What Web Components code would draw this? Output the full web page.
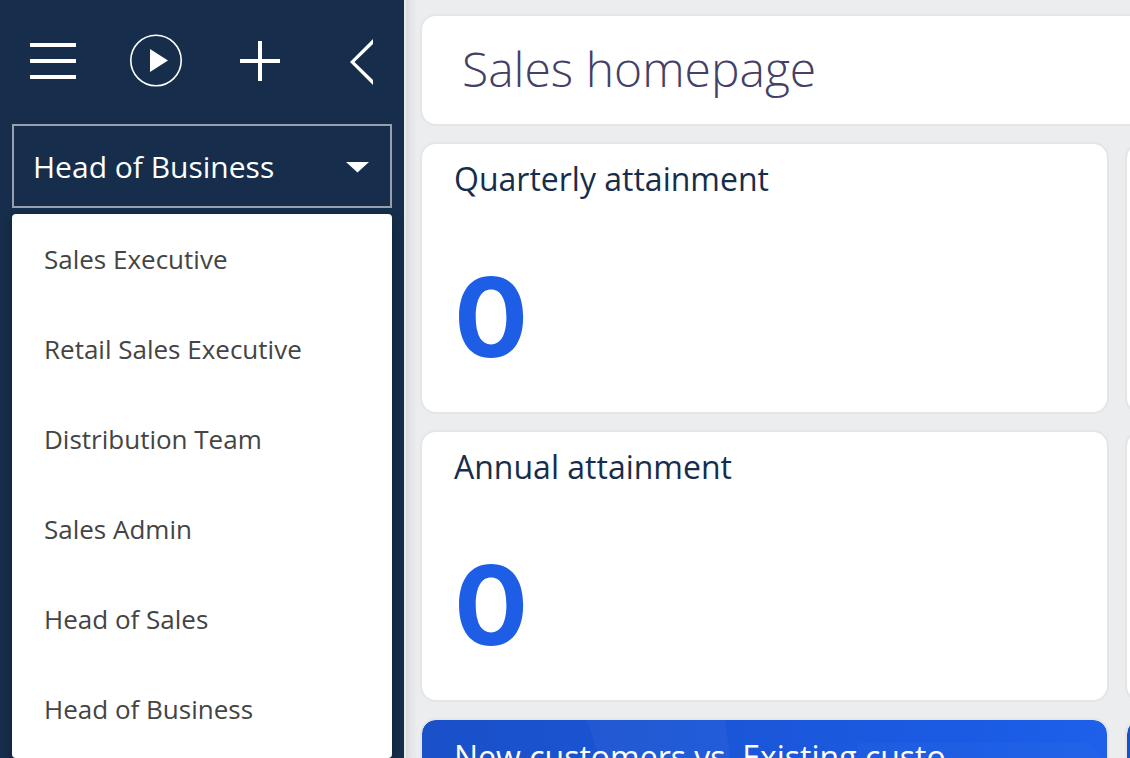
<!DOCTYPE html>
<html lang="en">
<head>
<meta charset="utf-8">
<title>Sales homepage</title>
<style>
html, body { height: 100%; margin: 0; }
body { font-family: "Open Sans", "Noto Sans", sans-serif; overflow: hidden; background: #ebedef; }
</style>
</head>
<body>
<app-shell>
  <side-bar slot="side">
    <role-picker>
      <role-item>Sales Executive</role-item>
      <role-item>Retail Sales Executive</role-item>
      <role-item>Distribution Team</role-item>
      <role-item>Sales Admin</role-item>
      <role-item>Head of Sales</role-item>
      <role-item>Head of Business</role-item>
    </role-picker>
  </side-bar>
  <page-title>Sales homepage</page-title>
  <metric-card value="0">Quarterly attainment</metric-card>
  <metric-card></metric-card>
  <metric-card value="0">Annual attainment</metric-card>
  <metric-card></metric-card>
  <chart-card>New customers vs. Existing custo</chart-card>
  <chart-card></chart-card>
</app-shell>
<script>
function define(name, html, setup) {
  const template = document.createElement('template');
  template.innerHTML = html;
  customElements.define(name, class extends HTMLElement {
    constructor() {
      super();
      this.attachShadow({ mode: 'open' }).append(template.content.cloneNode(true));
    }
    connectedCallback() { if (setup) setup(this, this.shadowRoot); }
  });
}

define('app-shell', `
<style>
:host { display: flex; height: 100vh; overflow: hidden; }
main {
  flex: 1; min-width: 0; box-sizing: border-box; overflow: hidden;
  padding: 14px 16px 0;
  background: linear-gradient(90deg, #e9eaeb 2px, #d8dadc 2px, #e4e6e8 7px, #ebedef 14px);
  display: grid; grid-template-columns: repeat(2, minmax(689px, 1fr));
  gap: 16px; align-content: start;
}
</style>
<slot name="side"></slot>
<main><slot></slot></main>`);

define('side-bar', `
<style>
:host { display: block; flex: none; width: 404px; box-sizing: border-box; background: #162e4b; color: #fff; }
nav { display: flex; justify-content: space-between; align-items: center; height: 124px; box-sizing: border-box; padding: 0 18px 4px 30px; }
button { width: 46px; height: 60px; padding: 0; border: 0; background: none; color: inherit; display: flex; align-items: center; justify-content: center; }
svg { flex: none; display: block; overflow: visible; }
</style>
<nav aria-label="Main">
  <button aria-label="Menu"><svg width="46" height="52"><path d="M0 9h46v4H0zM0 25h46v4H0zM0 41h46v4H0z" fill="currentColor"/></svg></button>
  <button aria-label="Play"><svg width="52" height="52"><circle cx="26" cy="26.500" r="25.200" fill="none" stroke="currentColor" stroke-width="1.600"/><path d="M20 15v23l18-11.500z" fill="currentColor"/></svg></button>
  <button aria-label="Add"><svg width="40" height="42"><path d="M18 2h4v18h18v4H22v18h-4V24H0v-4h18z" fill="currentColor"/></svg></button>
  <button aria-label="Collapse"><svg width="24" height="46"><path d="M22 2v5L3.500 25 22 43v5L-1 25z" fill="currentColor"/></svg></button>
</nav>
<slot></slot>`);

define('role-picker', `
<style>
:host { display: block; padding: 0 12px; }
.field { position: relative; }
select {
  appearance: none; display: block; width: 100%; height: 84px; box-sizing: border-box; margin: 0;
  padding: 0 60px 0 19px; border: 2px solid #979eae; border-radius: 0; background: transparent;
  color: #fff; font: 30px "Open Sans", "Noto Sans", sans-serif;
}
svg { position: absolute; right: 23px; top: 38px; pointer-events: none; }
.list { margin-top: 6px; padding-bottom: 4px; background: #fff; border-radius: 4px; color: #444; box-shadow: 0 4px 10px rgba(0,0,0,.35); }
</style>
<div class="field">
  <select aria-label="Role"><option>Head of Business</option></select>
  <svg width="23" height="11"><path d="M0 0h23L11.500 10.500z" fill="#fff"/></svg>
</div>
<div class="list" role="listbox" aria-label="Roles"><slot></slot></div>`);

define('role-item', `
<style>
:host { display: block; }
button { display: block; width: 100%; height: 90px; padding: 0 32px; border: 0; background: none; color: inherit; text-align: left; font: 26px "Open Sans", "Noto Sans", sans-serif; }
</style>
<button role="option"><slot></slot></button>`);

define('page-title', `
<style>
:host { display: block; grid-column: 1 / -1; box-sizing: border-box; height: 112px; padding: 0 40px; background: #fff; border: 2px solid #e4e5e6; border-radius: 16px; }
h1 { margin: 0; font: 320 48px/106px "Open Sans", "Noto Sans", sans-serif; color: #444066; }
</style>
<h1><slot></slot></h1>`);

define('metric-card', `
<style>
:host { display: block; box-sizing: border-box; height: 272px; padding: 12px 32px; background: #fff; border: 2px solid #e4e5e6; border-radius: 16px; }
h2 { margin: 0; font-size: 32px; line-height: 46px; font-weight: 400; color: #162e4b; min-height: 46px; }
p { margin: 50px 0 0; font: 700 110px/130px Inter, sans-serif; color: #1e5ee6; }
</style>
<h2><slot></slot></h2><p></p>`, (host, root) => {
  root.querySelector('p').textContent = host.getAttribute('value') || '';
});

define('chart-card', `
<style>
:host { display: block; position: relative; box-sizing: border-box; height: 272px; padding: 12px 32px; overflow: hidden; border: 2px solid #e4e5e6; border-radius: 16px; background: linear-gradient(90deg, #1a50c8, #1b5be4 80%, #1e60ea) padding-box; }
svg { position: absolute; left: 0; top: 0; }
h2 { position: relative; margin: 0; font-size: 32px; line-height: 50px; font-weight: 400; color: #fff; white-space: nowrap; }
</style>
<svg width="100%" height="100%" aria-hidden="true"><path d="M165 0H303L330 200H230z" fill="#fff" fill-opacity=".04"/><path d="M436 23H668L685 45V200H436z" fill="#fff" fill-opacity=".02"/></svg>
<h2><slot></slot></h2>`);
</script>
</body>
</html>
